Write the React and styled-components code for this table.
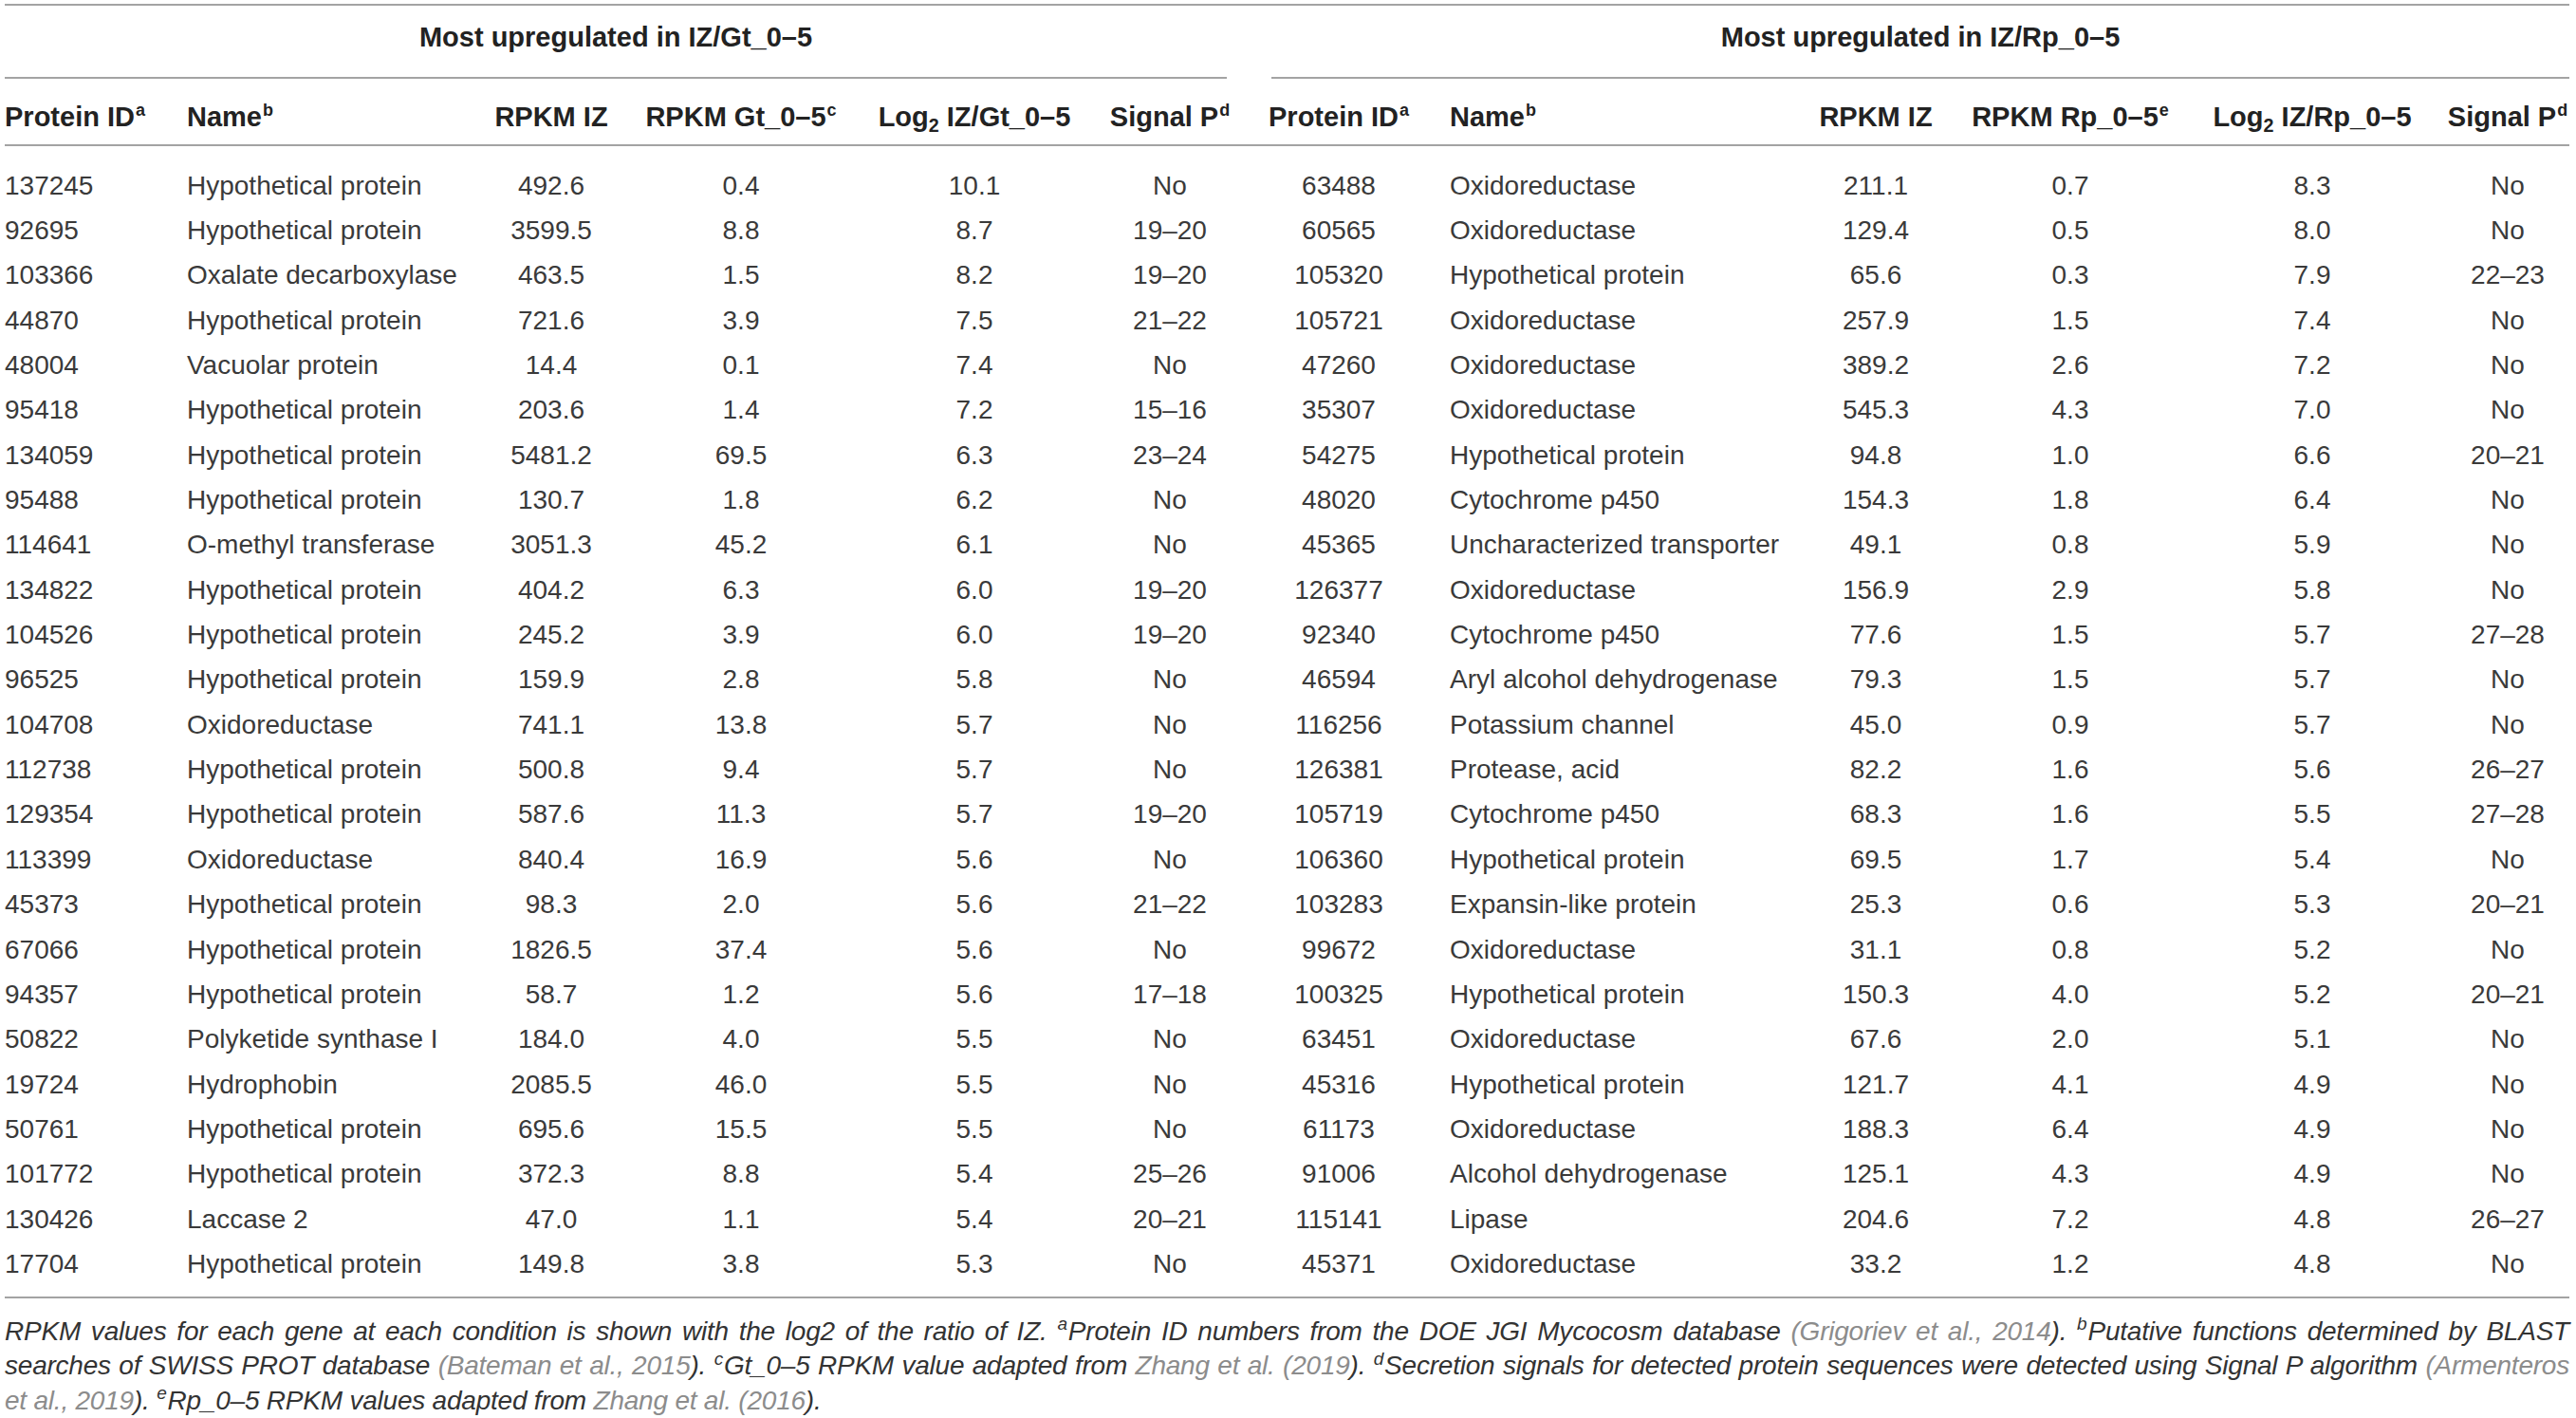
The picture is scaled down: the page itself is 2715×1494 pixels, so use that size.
import React from "react";
import styled, { createGlobalStyle } from "styled-components";

const Global = createGlobalStyle`
  html, body { margin: 0; padding: 0; background: #ffffff; }
  body { font-family: "Liberation Sans", Arial, Helvetica, sans-serif; }
`;

const COLS =
  "192px 284px 200px 200px 292px 120px 47px 142px 404px 182px 228px 282px 130px";

const RULE = "2px solid #a3a3a3";

const Page = styled.div`
  width: 2703px;
  padding: 4px 7px 0 5px;
`;

const Table = styled.div`
  border-top: ${RULE};
  border-bottom: ${RULE};
`;

const GroupRow = styled.div`
  display: grid;
  grid-template-columns: ${COLS};
  height: 77px;
`;

const GroupTitle = styled.div`
  grid-column: ${(p) => p.$span};
  display: flex;
  align-items: center;
  justify-content: center;
  padding-bottom: 8px;
  border-bottom: ${RULE};
  font-weight: 700;
  font-size: 29px;
  color: #222;
  white-space: nowrap;
`;

const HeadRow = styled.div`
  display: grid;
  grid-template-columns: ${COLS};
  box-sizing: border-box;
  height: 71px;
  padding-top: 24px;
  border-bottom: ${RULE};
`;

const Body = styled.div`
  padding: 18px 0 10px;
`;

const Row = styled.div`
  display: grid;
  grid-template-columns: ${COLS};
  height: 47.35px;
`;

const Cell = styled.div`
  display: flex;
  align-items: center;
  justify-content: ${(p) => (p.$align === "left" ? "flex-start" : "center")};
  padding-left: ${(p) => p.$indent || 0}px;
  white-space: nowrap;
`;

const HeadCell = styled(Cell)`
  align-items: flex-start;
  height: 32px;
  line-height: 32px;
  font-weight: 700;
  font-size: 29px;
  color: #222;
`;

const HeadText = styled.span`
  display: inline-block;
`;

const DataCell = styled(Cell)`
  font-size: 28px;
  color: #3a3a3a;
`;

const Sup = styled.sup`
  font-size: 0.62em;
  line-height: 0;
  vertical-align: 0.62em;
  margin-left: 1px;
`;

const Sub = styled.sub`
  font-size: 0.68em;
  line-height: 0;
  vertical-align: -0.3em;
`;

const Notes = styled.div`
  margin-top: 17px;
  font-style: italic;
  font-size: 28px;
  line-height: 36.5px;
  letter-spacing: -0.22px;
  color: #333;
`;

const NoteLine = styled.div`
  white-space: nowrap;
  text-align: justify;
  text-align-last: ${(p) => (p.$last ? "left" : "justify")};
`;

const Cite = styled.span`
  color: #8c8c8c;
`;

const NoteSup = styled.sup`
  font-size: 0.68em;
  line-height: 0;
  vertical-align: 0.55em;
  margin-right: 1px;
`;

const left = [
  ["137245", "Hypothetical protein", "492.6", "0.4", "10.1", "No"],
  ["92695", "Hypothetical protein", "3599.5", "8.8", "8.7", "19–20"],
  ["103366", "Oxalate decarboxylase", "463.5", "1.5", "8.2", "19–20"],
  ["44870", "Hypothetical protein", "721.6", "3.9", "7.5", "21–22"],
  ["48004", "Vacuolar protein", "14.4", "0.1", "7.4", "No"],
  ["95418", "Hypothetical protein", "203.6", "1.4", "7.2", "15–16"],
  ["134059", "Hypothetical protein", "5481.2", "69.5", "6.3", "23–24"],
  ["95488", "Hypothetical protein", "130.7", "1.8", "6.2", "No"],
  ["114641", "O-methyl transferase", "3051.3", "45.2", "6.1", "No"],
  ["134822", "Hypothetical protein", "404.2", "6.3", "6.0", "19–20"],
  ["104526", "Hypothetical protein", "245.2", "3.9", "6.0", "19–20"],
  ["96525", "Hypothetical protein", "159.9", "2.8", "5.8", "No"],
  ["104708", "Oxidoreductase", "741.1", "13.8", "5.7", "No"],
  ["112738", "Hypothetical protein", "500.8", "9.4", "5.7", "No"],
  ["129354", "Hypothetical protein", "587.6", "11.3", "5.7", "19–20"],
  ["113399", "Oxidoreductase", "840.4", "16.9", "5.6", "No"],
  ["45373", "Hypothetical protein", "98.3", "2.0", "5.6", "21–22"],
  ["67066", "Hypothetical protein", "1826.5", "37.4", "5.6", "No"],
  ["94357", "Hypothetical protein", "58.7", "1.2", "5.6", "17–18"],
  ["50822", "Polyketide synthase I", "184.0", "4.0", "5.5", "No"],
  ["19724", "Hydrophobin", "2085.5", "46.0", "5.5", "No"],
  ["50761", "Hypothetical protein", "695.6", "15.5", "5.5", "No"],
  ["101772", "Hypothetical protein", "372.3", "8.8", "5.4", "25–26"],
  ["130426", "Laccase 2", "47.0", "1.1", "5.4", "20–21"],
  ["17704", "Hypothetical protein", "149.8", "3.8", "5.3", "No"],
];

const right = [
  ["63488", "Oxidoreductase", "211.1", "0.7", "8.3", "No"],
  ["60565", "Oxidoreductase", "129.4", "0.5", "8.0", "No"],
  ["105320", "Hypothetical protein", "65.6", "0.3", "7.9", "22–23"],
  ["105721", "Oxidoreductase", "257.9", "1.5", "7.4", "No"],
  ["47260", "Oxidoreductase", "389.2", "2.6", "7.2", "No"],
  ["35307", "Oxidoreductase", "545.3", "4.3", "7.0", "No"],
  ["54275", "Hypothetical protein", "94.8", "1.0", "6.6", "20–21"],
  ["48020", "Cytochrome p450", "154.3", "1.8", "6.4", "No"],
  ["45365", "Uncharacterized transporter", "49.1", "0.8", "5.9", "No"],
  ["126377", "Oxidoreductase", "156.9", "2.9", "5.8", "No"],
  ["92340", "Cytochrome p450", "77.6", "1.5", "5.7", "27–28"],
  ["46594", "Aryl alcohol dehydrogenase", "79.3", "1.5", "5.7", "No"],
  ["116256", "Potassium channel", "45.0", "0.9", "5.7", "No"],
  ["126381", "Protease, acid", "82.2", "1.6", "5.6", "26–27"],
  ["105719", "Cytochrome p450", "68.3", "1.6", "5.5", "27–28"],
  ["106360", "Hypothetical protein", "69.5", "1.7", "5.4", "No"],
  ["103283", "Expansin-like protein", "25.3", "0.6", "5.3", "20–21"],
  ["99672", "Oxidoreductase", "31.1", "0.8", "5.2", "No"],
  ["100325", "Hypothetical protein", "150.3", "4.0", "5.2", "20–21"],
  ["63451", "Oxidoreductase", "67.6", "2.0", "5.1", "No"],
  ["45316", "Hypothetical protein", "121.7", "4.1", "4.9", "No"],
  ["61173", "Oxidoreductase", "188.3", "6.4", "4.9", "No"],
  ["91006", "Alcohol dehydrogenase", "125.1", "4.3", "4.9", "No"],
  ["115141", "Lipase", "204.6", "7.2", "4.8", "26–27"],
  ["45371", "Oxidoreductase", "33.2", "1.2", "4.8", "No"],
];

function Head({ children, ...rest }) {
  return (
    <HeadCell {...rest}>
      <HeadText>{children}</HeadText>
    </HeadCell>
  );
}

function HalfHeader({ tag, supR }) {
  const isLeft = tag === "Gt";
  return (
    <>
      <Head $align={isLeft ? "left" : "center"}>
        Protein ID<Sup>a</Sup>
      </Head>
      <Head $align="left" $indent={isLeft ? 0 : 46}>
        Name<Sup>b</Sup>
      </Head>
      <Head>RPKM IZ</Head>
      <Head>
        RPKM {tag}_0–5<Sup>{supR}</Sup>
      </Head>
      <Head>
        Log<Sub>2</Sub> IZ/{tag}_0–5
      </Head>
      <Head>
        Signal P<Sup>d</Sup>
      </Head>
    </>
  );
}

function HalfRow({ r, isLeft }) {
  return (
    <>
      <DataCell $align={isLeft ? "left" : "center"}>{r[0]}</DataCell>
      <DataCell $align="left" $indent={isLeft ? 0 : 46}>
        {r[1]}
      </DataCell>
      <DataCell>{r[2]}</DataCell>
      <DataCell>{r[3]}</DataCell>
      <DataCell>{r[4]}</DataCell>
      <DataCell>{r[5]}</DataCell>
    </>
  );
}

export default function App() {
  return (
    <Page>
      <Global />
      <Table>
        <GroupRow>
          <GroupTitle $span="1 / 7">Most upregulated in IZ/Gt_0–5</GroupTitle>
          <GroupTitle $span="8 / 14">Most upregulated in IZ/Rp_0–5</GroupTitle>
        </GroupRow>
        <HeadRow>
          <HalfHeader tag="Gt" supR="c" />
          <div />
          <HalfHeader tag="Rp" supR="e" />
        </HeadRow>
        <Body>
          {left.map((r, i) => (
            <Row key={r[0]}>
              <HalfRow r={r} isLeft />
              <div />
              <HalfRow r={right[i]} />
            </Row>
          ))}
        </Body>
      </Table>
      <Notes>
        <NoteLine>
          RPKM values for each gene at each condition is shown with the log2 of
          the ratio of IZ. <NoteSup>a</NoteSup>Protein ID numbers from the DOE
          JGI Mycocosm database <Cite>(Grigoriev et al., 2014</Cite>).{" "}
          <NoteSup>b</NoteSup>Putative functions determined by BLAST
        </NoteLine>
        <NoteLine>
          searches of SWISS PROT database <Cite>(Bateman et al., 2015</Cite>).{" "}
          <NoteSup>c</NoteSup>Gt_0–5 RPKM value adapted from{" "}
          <Cite>Zhang et al. (2019</Cite>). <NoteSup>d</NoteSup>Secretion
          signals for detected protein sequences were detected using Signal P
          algorithm <Cite>(Armenteros</Cite>
        </NoteLine>
        <NoteLine $last>
          <Cite>et al., 2019</Cite>). <NoteSup>e</NoteSup>Rp_0–5 RPKM values
          adapted from <Cite>Zhang et al. (2016</Cite>).
        </NoteLine>
      </Notes>
    </Page>
  );
}
